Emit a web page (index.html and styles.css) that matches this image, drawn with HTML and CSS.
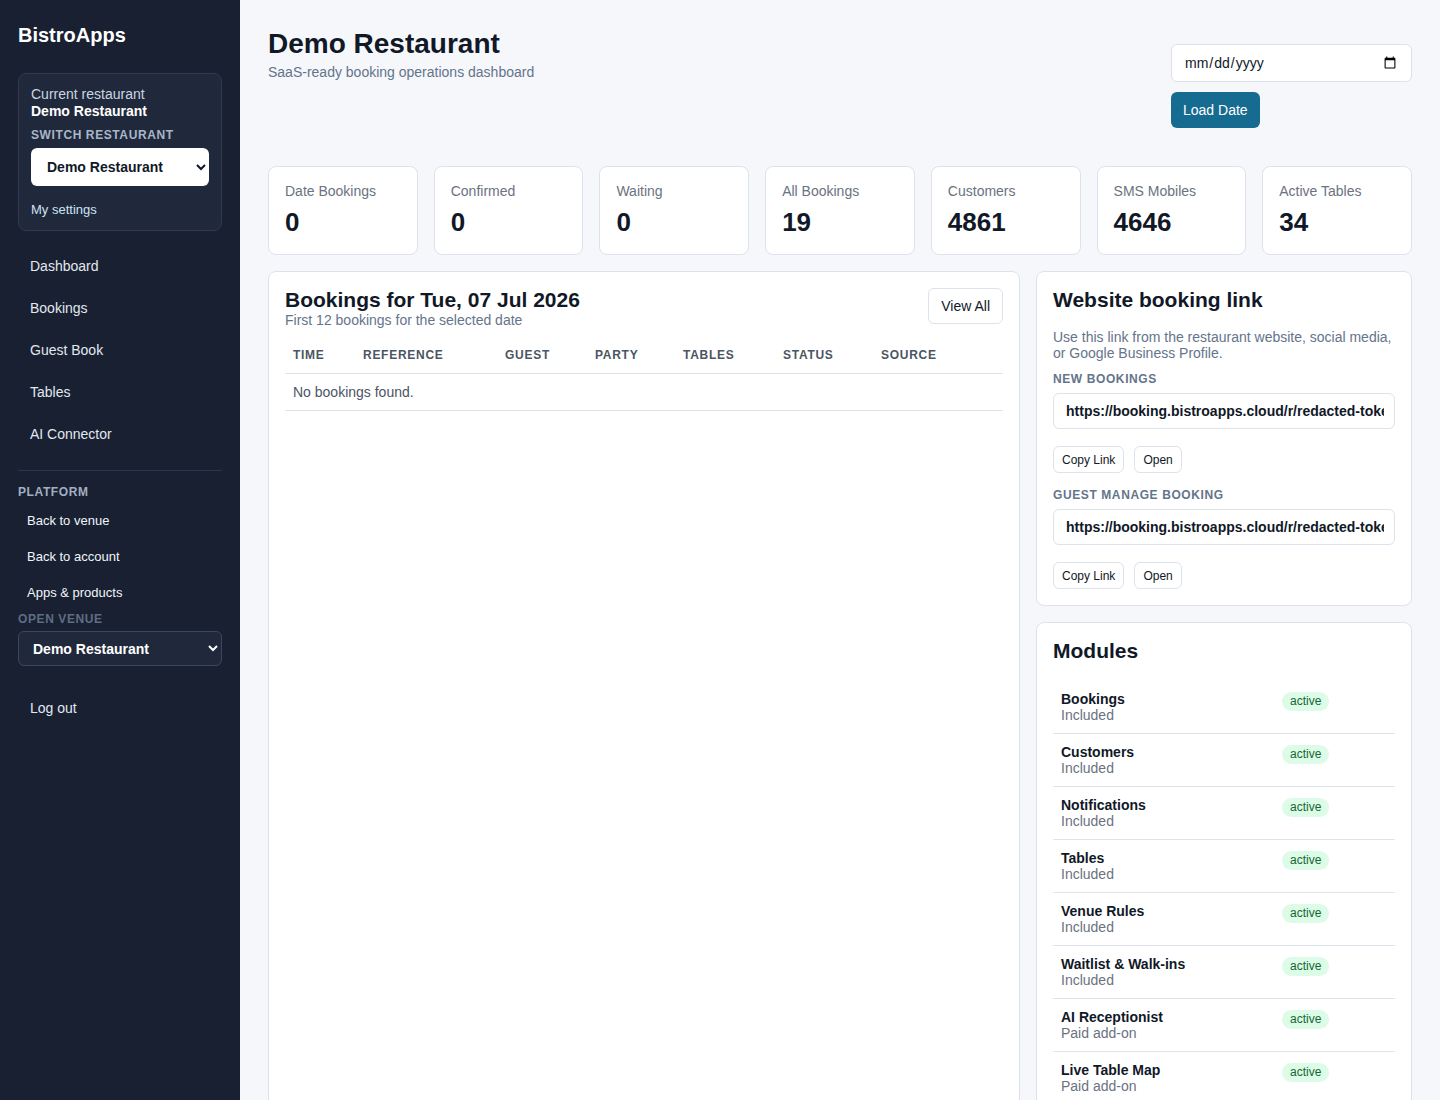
FILE: index.html
```html
<!DOCTYPE html>
<html lang="en">
  <head>
    <meta charset="UTF-8" />
    <meta name="viewport" content="width=device-width, initial-scale=1.0" />
    <title>BistroApps - Dashboard</title>
    <link rel="stylesheet" href="styles.css">
  </head>
  <body>
    <div class="layout">
      <aside class="sidebar">
        <div class="brand">BistroApps</div>

        <div class="venue-box">
          <div class="venue-caption">Current restaurant</div>
          <div class="venue-name">Demo Restaurant</div>
          <div class="side-label">Switch restaurant</div>
          <select class="venue-select">
            <option>Demo Restaurant</option>
          </select>
          <a class="settings-link" href="#">My settings</a>
        </div>

        <nav class="nav">
          <a href="#">Dashboard</a>
          <a href="#">Bookings</a>
          <a href="#">Guest Book</a>
          <a href="#">Tables</a>
          <a href="#">AI Connector</a>
        </nav>

        <div class="platform">
          <div class="platform-title">Platform</div>
          <a href="#">Back to venue</a>
          <a href="#">Back to account</a>
          <a href="#">Apps &amp; products</a>
          <div class="open-label">Open venue</div>
          <select class="open-select">
            <option>Demo Restaurant</option>
          </select>
        </div>

        <a class="logout" href="#">Log out</a>
      </aside>

      <main class="main">
        <header class="page-head">
          <div>
            <h1>Demo Restaurant</h1>
            <p class="muted">SaaS-ready booking operations dashboard</p>
          </div>
          <form class="date-form">
            <input type="date" class="date-input" />
            <button type="button" class="btn-primary">Load Date</button>
          </form>
        </header>

        <section class="stats">
          <div class="stat"><span>Date Bookings</span><strong>0</strong></div>
          <div class="stat"><span>Confirmed</span><strong>0</strong></div>
          <div class="stat"><span>Waiting</span><strong>0</strong></div>
          <div class="stat"><span>All Bookings</span><strong>19</strong></div>
          <div class="stat"><span>Customers</span><strong>4861</strong></div>
          <div class="stat"><span>SMS Mobiles</span><strong>4646</strong></div>
          <div class="stat"><span>Active Tables</span><strong>34</strong></div>
        </section>

        <section class="columns">
          <div class="card">
            <div class="card-head">
              <div>
                <h2>Bookings for Tue, 07 Jul 2026</h2>
                <p class="muted">First 12 bookings for the selected date</p>
              </div>
              <a class="btn" href="#">View All</a>
            </div>
            <table class="bookings">
              <colgroup>
                <col style="width: 70px">
                <col style="width: 142px">
                <col style="width: 90px">
                <col style="width: 88px">
                <col style="width: 100px">
                <col style="width: 98px">
                <col>
              </colgroup>
              <thead>
                <tr>
                  <th>Time</th>
                  <th>Reference</th>
                  <th>Guest</th>
                  <th>Party</th>
                  <th>Tables</th>
                  <th>Status</th>
                  <th>Source</th>
                </tr>
              </thead>
              <tbody>
                <tr>
                  <td colspan="7">No bookings found.</td>
                </tr>
              </tbody>
            </table>
          </div>

          <div class="side-col">
            <div class="card">
              <h2>Website booking link</h2>
              <p class="muted intro">Use this link from the restaurant website, social media, or Google Business Profile.</p>

              <div class="field-label">New bookings</div>
              <input class="link-input" type="text" readonly value="https://booking.bistroapps.cloud/r/redacted-token" />
              <div class="link-actions">
                <button type="button" class="btn-sm">Copy Link</button>
                <button type="button" class="btn-sm">Open</button>
              </div>

              <div class="field-label">Guest manage booking</div>
              <input class="link-input" type="text" readonly value="https://booking.bistroapps.cloud/r/redacted-token/manage" />
              <div class="link-actions">
                <button type="button" class="btn-sm">Copy Link</button>
                <button type="button" class="btn-sm">Open</button>
              </div>
            </div>

            <div class="card">
              <h2>Modules</h2>
              <div class="modules">
                <div class="module">
                  <div><b>Bookings</b><span>Included</span></div>
                  <div><span class="badge">active</span></div>
                </div>
                <div class="module">
                  <div><b>Customers</b><span>Included</span></div>
                  <div><span class="badge">active</span></div>
                </div>
                <div class="module">
                  <div><b>Notifications</b><span>Included</span></div>
                  <div><span class="badge">active</span></div>
                </div>
                <div class="module">
                  <div><b>Tables</b><span>Included</span></div>
                  <div><span class="badge">active</span></div>
                </div>
                <div class="module">
                  <div><b>Venue Rules</b><span>Included</span></div>
                  <div><span class="badge">active</span></div>
                </div>
                <div class="module">
                  <div><b>Waitlist &amp; Walk-ins</b><span>Included</span></div>
                  <div><span class="badge">active</span></div>
                </div>
                <div class="module">
                  <div><b>AI Receptionist</b><span>Paid add-on</span></div>
                  <div><span class="badge">active</span></div>
                </div>
                <div class="module">
                  <div><b>Live Table Map</b><span>Paid add-on</span></div>
                  <div><span class="badge">active</span></div>
                </div>
              </div>
            </div>
          </div>
        </section>
      </main>
    </div>
  </body>
</html>
```

FILE: styles.css
```css
* {
  box-sizing: border-box;
}
html,
body {
  margin: 0;
  height: 100%;
}
body {
  font-family: "Liberation Sans", Arial, sans-serif;
  font-size: 14px;
  color: #111827;
  background: #f5f7fb;
}
a {
  text-decoration: none;
  color: inherit;
}
input,
select,
button {
  font-family: inherit;
}

.layout {
  display: flex;
  min-height: 100%;
}

/* sidebar */
.sidebar {
  width: 240px;
  flex-shrink: 0;
  background: #182032;
  color: #e2e8f0;
  padding: 22px 18px;
}
.brand {
  font-size: 20px;
  line-height: 26px;
  font-weight: 700;
  color: #fff;
  margin-bottom: 25px;
}
.venue-box {
  background: #1f293b;
  border: 1px solid #30394d;
  border-radius: 8px;
  padding: 12px;
}
.venue-caption {
  line-height: 17px;
  color: #cbd5e1;
}
.venue-name {
  line-height: 17px;
  font-weight: 700;
  color: #fff;
}
.side-label {
  margin-top: 8px;
  font-size: 12px;
  line-height: 14px;
  font-weight: 700;
  letter-spacing: 0.05em;
  text-transform: uppercase;
  color: #a9b6c8;
}
.venue-select {
  display: block;
  width: 100%;
  height: 38px;
  margin-top: 6px;
  padding: 0 6px 0 12px;
  border: 0;
  border-radius: 6px;
  background: #fff;
  color: #111827;
  font-size: 14px;
  font-weight: 700;
}
.settings-link {
  display: block;
  margin-top: 16px;
  font-size: 13px;
  line-height: 16px;
  color: #cfe2f3;
}
.nav {
  margin-top: 14px;
  display: flex;
  flex-direction: column;
}
.nav a {
  padding: 12px;
  line-height: 18px;
  color: #e2e8f0;
}
.platform {
  margin-top: 15px;
  padding-top: 14px;
  border-top: 1px solid #2d3749;
  display: flex;
  flex-direction: column;
}
.platform-title,
.open-label {
  font-size: 12px;
  line-height: 14px;
  font-weight: 700;
  letter-spacing: 0.05em;
  text-transform: uppercase;
  color: #a3afc0;
}
.open-label {
  margin-top: 1px;
  color: #5f6d82;
}
.platform a {
  padding: 9px;
  font-size: 13px;
  line-height: 18px;
  color: #f1f5f9;
}
.platform a:first-of-type {
  margin-top: 4px;
}
.open-select {
  height: 35px;
  margin-top: 5px;
  padding: 0 6px 0 10px;
  background: #1f293b;
  border: 1px solid #3b4660;
  border-radius: 6px;
  color: #fff;
  font-size: 14px;
  font-weight: 700;
}
.logout {
  display: block;
  margin-top: 21px;
  padding: 12px;
  line-height: 18px;
}

/* main */
.main {
  flex: 1;
  padding: 28px;
  min-width: 0;
}
.muted {
  color: #64748b;
  margin: 0;
}
.page-head {
  display: flex;
  justify-content: space-between;
  align-items: flex-start;
  margin-bottom: 38px;
}
h1 {
  margin: 0;
  font-size: 28px;
  line-height: 32px;
}
.page-head .muted {
  margin-top: 4px;
  line-height: 17px;
}
.date-form {
  width: 241px;
  margin-top: 16px;
  display: flex;
  flex-direction: column;
  align-items: flex-start;
  gap: 10px;
}
.date-input {
  width: 100%;
  height: 38px;
  padding: 0 12px;
  border: 1px solid #dbe2ea;
  border-radius: 6px;
  background: #fff;
  color: #111827;
  font-size: 14px;
}
.btn-primary {
  height: 36px;
  padding: 0 12px;
  border: 0;
  border-radius: 6px;
  background: #166b91;
  color: #fff;
  font-size: 14px;
}

.stats {
  display: grid;
  grid-template-columns: repeat(7, 1fr);
  gap: 16px;
}
.stat {
  background: #fff;
  border: 1px solid #dce3ec;
  border-radius: 8px;
  padding: 16px;
  display: flex;
  flex-direction: column;
  gap: 6px;
}
.stat span {
  line-height: 17px;
  color: #6b7280;
}
.stat strong {
  font-size: 26px;
  line-height: 32px;
}

.columns {
  margin-top: 16px;
  display: grid;
  grid-template-columns: 2fr 1fr;
  gap: 16px;
}
.side-col {
  display: flex;
  flex-direction: column;
  gap: 16px;
}
.card {
  background: #fff;
  border: 1px solid #dce3ec;
  border-radius: 8px;
  padding: 16px;
}
h2 {
  margin: 0;
  font-size: 21px;
  line-height: 24px;
}
.card-head {
  display: flex;
  justify-content: space-between;
  align-items: flex-start;
}
.card-head .muted {
  line-height: 16px;
}
.btn {
  display: inline-flex;
  align-items: center;
  height: 36px;
  padding: 0 12px;
  border: 1px solid #dce3ec;
  border-radius: 6px;
  background: #fff;
}

.bookings {
  width: 100%;
  margin-top: 10px;
  border-collapse: collapse;
  table-layout: fixed;
}
.bookings th {
  text-align: left;
  padding: 10px 8px;
  font-size: 12px;
  line-height: 15px;
  letter-spacing: 0.06em;
  text-transform: uppercase;
  color: #4b5563;
  border-bottom: 1px solid #dce3ec;
}
.bookings td {
  padding: 10px 8px;
  line-height: 16px;
  color: #4b5563;
  border-bottom: 1px solid #dce3ec;
}

.intro {
  margin-top: 17px;
  line-height: 16px;
}
.field-label {
  margin-top: 11px;
  font-size: 12px;
  line-height: 14px;
  font-weight: 700;
  letter-spacing: 0.05em;
  text-transform: uppercase;
  color: #64748b;
}
.link-actions + .field-label {
  margin-top: 15px;
}
.link-input {
  display: block;
  width: 100%;
  height: 36px;
  margin-top: 7px;
  padding: 0 10px 0 12px;
  border: 1px solid #dce3ec;
  border-radius: 6px;
  font-size: 14px;
  font-weight: 700;
  color: #111827;
}
.link-actions {
  display: flex;
  gap: 10px;
  margin-top: 17px;
}
.btn-sm {
  height: 27px;
  padding: 0 8px;
  border: 1px solid #dce3ec;
  border-radius: 6px;
  background: #fff;
  color: #111827;
  font-size: 12px;
}

.modules {
  margin-top: 18px;
}
.module {
  display: grid;
  grid-template-columns: 1fr 105px;
  padding: 10px 8px;
  border-bottom: 1px solid #dce3ec;
}
.module b,
.module span {
  display: block;
  line-height: 16px;
}
.module span {
  color: #6b7280;
}
.module .badge {
  display: inline-block;
  margin-top: 1px;
  padding: 0 8px;
  border-radius: 999px;
  background: #dcfce7;
  color: #166534;
  font-size: 12px;
  line-height: 19px;
}
```
